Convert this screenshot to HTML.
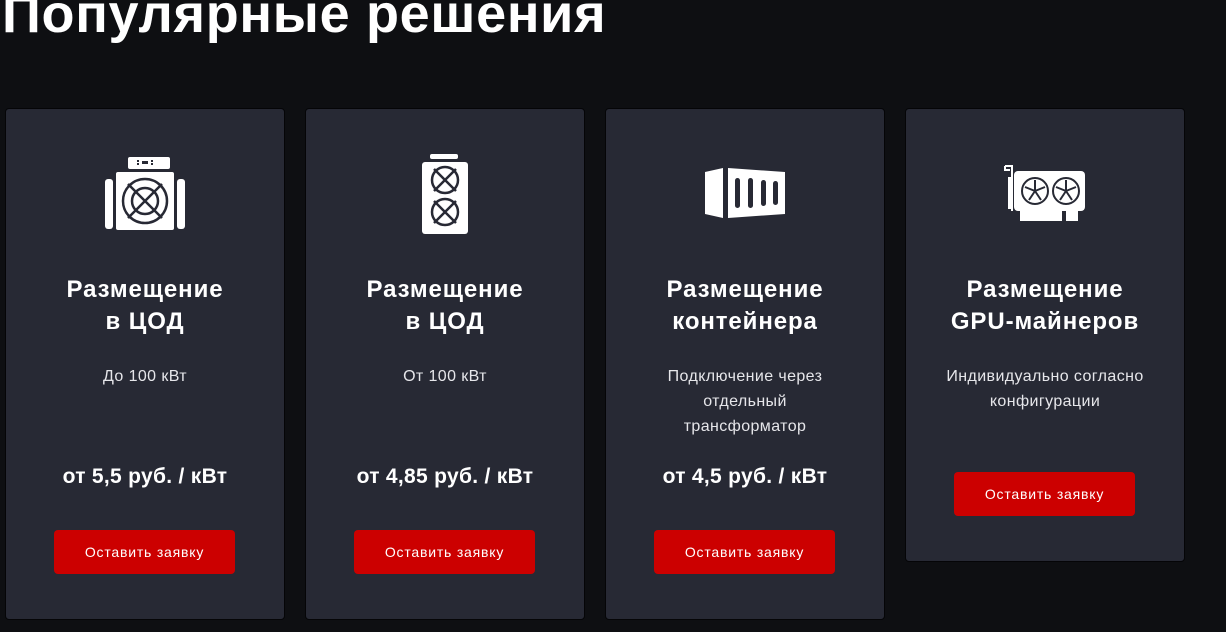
<!DOCTYPE html>
<html><head><meta charset="utf-8"><style>
*{margin:0;padding:0;box-sizing:border-box}
body{width:1226px;height:632px;background:#0e0f12;font-family:"Liberation Sans",sans-serif;color:#fff;overflow:hidden;position:relative}
h1{position:absolute;left:2px;top:-17px;font-size:54px;font-weight:bold;letter-spacing:0.7px;white-space:nowrap}
.card{position:absolute;top:108px;width:280px;height:512px;background:#272934;border:1px solid #050507;border-radius:4px}
.ic{position:absolute;left:0;width:100%;top:40px;height:90px;display:flex;justify-content:center;align-items:center}
.t{position:absolute;top:165px;width:100%;text-align:center;font-size:24px;letter-spacing:0.9px;font-weight:bold;line-height:32px}
.s{position:absolute;top:255px;width:100%;text-align:center;font-size:16px;letter-spacing:0.4px;line-height:25px;color:#e6e6ea;padding:0 48px}
.p{position:absolute;top:356px;width:100%;text-align:center;font-size:21px;letter-spacing:0.3px;font-weight:bold}
.b{position:absolute;left:48px;top:421px;width:181px;height:44px;background:#cc0000;border-radius:4px;font-size:14px;letter-spacing:0.8px;text-align:center;line-height:44px}
</style></head><body>
<h1>Популярные решения</h1>

<div class="card" style="left:5px">
<div class="ic"><svg width="82" height="74" viewBox="0 0 82 74"><rect x="24" y="0" width="42" height="12" rx="2" fill="#fff"/><rect x="38" y="4" width="6" height="3" fill="#272934"/><rect x="33" y="3" width="2" height="2" fill="#272934"/><rect x="33" y="6" width="2" height="2" fill="#272934"/><rect x="47" y="3" width="2" height="2" fill="#272934"/><rect x="47" y="6" width="2" height="2" fill="#272934"/><rect x="1" y="22" width="8" height="50" rx="3" fill="#fff"/><rect x="73" y="22" width="8" height="50" rx="3" fill="#fff"/><rect x="12" y="15" width="58" height="58" rx="2" fill="#fff"/><g stroke="#272934" stroke-width="2.5" fill="none"><circle cx="41" cy="44" r="22"/><circle cx="41" cy="44" r="13"/><path d="M24 27L58 61M58 27L24 61"/></g></svg></div>
<div class="t">Размещение<br>в ЦОД</div><div class="s">До 100 кВт</div><div class="p">от 5,5 руб. / кВт</div><div class="b">Оставить заявку</div></div>

<div class="card" style="left:305px">
<div class="ic"><svg width="48" height="80" viewBox="0 0 48 80"><rect x="9" y="0" width="28" height="5" rx="2" fill="#fff"/><rect x="1" y="8" width="46" height="72" rx="3" fill="#fff"/><g stroke="#272934" stroke-width="2.5" fill="none"><circle cx="24" cy="26" r="13"/><circle cx="24" cy="58" r="13"/><path d="M13 15L35 37M35 15L13 37M13 47L35 69M35 47L13 69"/></g></svg></div>
<div class="t">Размещение<br>в ЦОД</div><div class="s">От 100 кВт</div><div class="p">от 4,85 руб. / кВт</div><div class="b">Оставить заявку</div></div>

<div class="card" style="left:605px">
<div class="ic"><svg width="82" height="52" viewBox="0 0 82 52"><path d="M1 4L19 0V50L1 46Z" fill="#fff"/><path d="M24 0L81 4V46L24 50Z" fill="#fff"/><g fill="#272934"><rect x="31" y="10" width="5" height="30" rx="2.5"/><rect x="44" y="10" width="5" height="30" rx="2.5"/><rect x="57" y="12" width="5" height="26" rx="2.5"/><rect x="69" y="13" width="5" height="24" rx="2.5"/></g></svg></div>
<div class="t">Размещение<br>контейнера</div><div class="s" style="padding:0 52px">Подключение через отдельный трансформатор</div><div class="p">от 4,5 руб. / кВт</div><div class="b">Оставить заявку</div></div>

<div class="card" style="left:905px;height:454px">
<div class="ic"><svg width="82" height="58" viewBox="0 0 82 58"><path d="M1 1H8V46M1 1V5H6" stroke="#fff" stroke-width="2" fill="none"/><rect x="4" y="12" width="5" height="32" fill="#fff"/><rect x="10" y="6" width="71" height="40" rx="4" fill="#fff"/><path d="M16 46H58V56H16Z M62 46H74V56H62Z" fill="#fff"/><g stroke="#272934" stroke-width="2" fill="none"><circle cx="31" cy="26" r="13"/><circle cx="62" cy="26" r="13"/><path d="M31 26L31 15M31 26L41 22M31 26L37 35M31 26L25 35M31 26L21 22M62 26L62 15M62 26L72 22M62 26L68 35M62 26L56 35M62 26L52 22"/></g></svg></div>
<div class="t">Размещение<br>GPU-майнеров</div><div class="s" style="padding:0 20px">Индивидуально согласно конфигурации</div><div class="b" style="top:363px">Оставить заявку</div></div>
</body></html>
